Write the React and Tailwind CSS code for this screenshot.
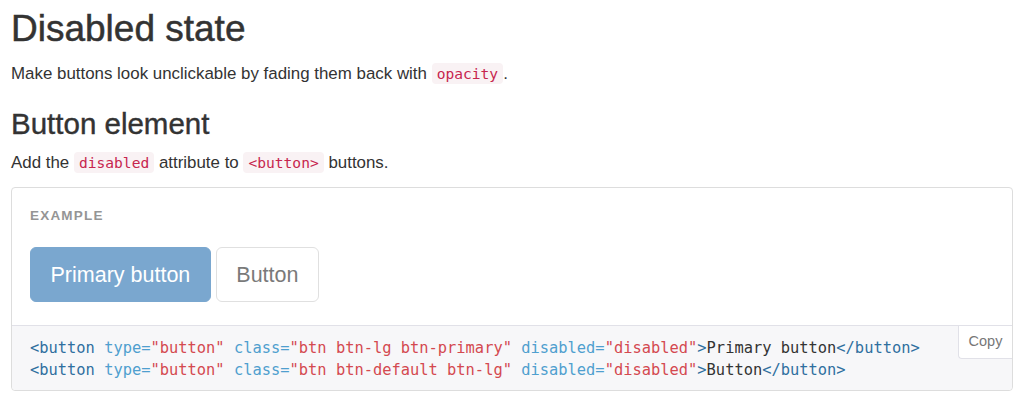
const Code = ({ children }) => (
  <code className="rounded-[4px] bg-[#f9f2f4] px-[5px] py-[2px] font-['DejaVu_Sans_Mono',monospace] text-[14.6px] text-[#c7254e]">
    {children}
  </code>
);

const Tag = ({ children }) => <span className="text-[#2f6f9f]">{children}</span>;
const Attr = ({ children }) => <span className="text-[#4f9fcf]">{children}</span>;
const Str = ({ children }) => <span className="text-[#d44950]">{children}</span>;

const CodeLine = ({ cls, label }) => (
  <div>
    <Tag>&lt;button</Tag> <Attr>type=</Attr>
    <Str>"button"</Str> <Attr>class=</Attr>
    <Str>"{cls}"</Str> <Attr>disabled=</Attr>
    <Str>"disabled"</Str>
    <Tag>&gt;</Tag>
    {label}
    <Tag>&lt;/button&gt;</Tag>
  </div>
);

export default function App() {
  return (
    <div className="min-h-[407px] bg-white px-[11px] font-['Liberation_Sans',Arial,sans-serif] text-[#333]">
      {/* Title */}
      <h1 className="pt-[9px] text-[37px] leading-[1.1] font-normal [-webkit-text-stroke:0.5px_#333]">
        Disabled state
      </h1>
      <p className="mt-[12px] text-[16.9px] leading-[24px]">
        Make buttons look unclickable by fading them back with <Code>opacity</Code>.
      </p>

      <h2 className="mt-[22px] text-[29.5px] leading-[1.1] font-normal [-webkit-text-stroke:0.4px_#333]">
        Button element
      </h2>
      <p className="mt-[11px] text-[16.9px] leading-[24px]">
        Add the <Code>disabled</Code> attribute to <Code>&lt;button&gt;</Code> buttons.
      </p>

      {/* Example box */}
      <div className="mt-[12px] rounded-[4px] border border-[#dddddd]">
        <div className="px-[18px] pt-[20px] pb-[23px]">
          <div className="text-[13.5px] leading-[16px] font-bold tracking-[1.2px] text-[#959595] uppercase">
            Example
          </div>
          <div className="mt-[23px] flex gap-[5px]">
            <button
              type="button"
              disabled
              className="h-[55px] rounded-[6px] border border-[#7aa7cf] bg-[#7aa7cf] px-[19.5px] text-[21.5px] text-white"
            >
              Primary button
            </button>
            <button
              type="button"
              disabled
              className="h-[55px] rounded-[6px] border border-[#e0e0e0] bg-white px-[19.5px] text-[21.5px] text-[#7a7a7a]"
            >
              Button
            </button>
          </div>
        </div>

        <div className="relative rounded-b-[4px] border-t border-[#e1e1e8] bg-[#f7f7f9] px-[18px] pt-[12px] pb-[9px] font-['DejaVu_Sans_Mono',monospace] text-[15.4px] leading-[21.5px] text-[#333] whitespace-pre">
          <CodeLine cls="btn btn-lg btn-primary" label="Primary button" />
          <CodeLine cls="btn btn-default btn-lg" label="Button" />
          <button
            type="button"
            className="absolute top-0 right-0 h-[33px] w-[54px] rounded-bl-[4px] border-b border-l border-[#e1e1e8] bg-white font-['Liberation_Sans',Arial,sans-serif] text-[14.5px] text-[#777]"
          >
            Copy
          </button>
        </div>
      </div>
    </div>
  );
}
